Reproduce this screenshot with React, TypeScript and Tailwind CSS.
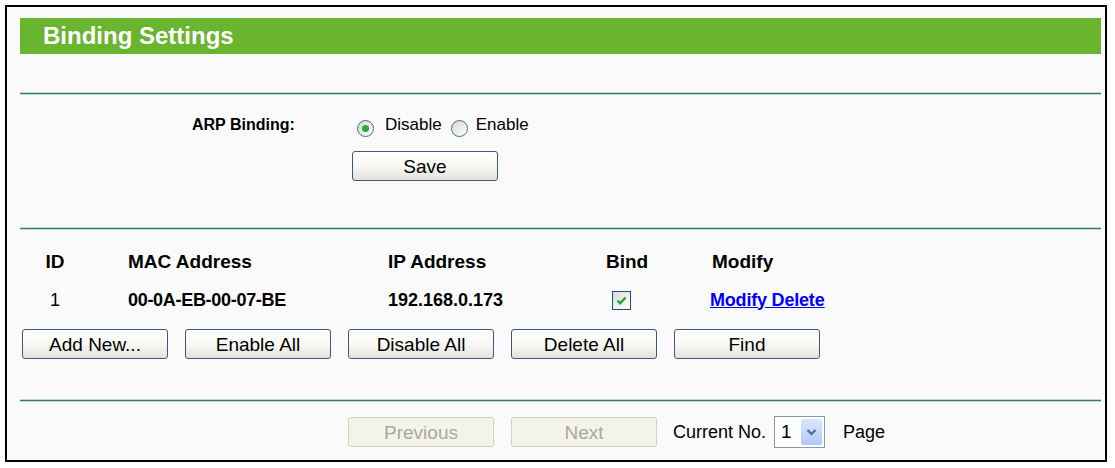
import React from 'react';

const font = { fontFamily: '"Liberation Sans", Arial, sans-serif' };

const Btn: React.FC<{ label: string; disabled?: boolean }> = ({ label, disabled }) => (
  <button
    type="button"
    disabled={disabled}
    className={
      disabled
        ? 'w-[146px] h-[30px] rounded-[3px] border border-[#d2d0c2] bg-[#f4f3ea] text-[#a9a89c] text-[19px] leading-none'
        : 'w-[146px] h-[30px] rounded-[3px] border border-[#3a5a7c] bg-gradient-to-b from-white via-[#f8f8f5] to-[#e3e2da] text-black text-[19px] leading-none'
    }
  >
    {label}
  </button>
);

const Radio: React.FC<{ checked?: boolean }> = ({ checked }) => (
  <span className="w-[17px] h-[17px] rounded-full border border-[#3d6a96] bg-gradient-to-br from-[#d6d6d0] to-white flex items-center justify-center">
    {checked && <span className="w-[7px] h-[7px] rounded-full bg-[#2fa83a]" />}
  </span>
);

const Divider = () => (
  <div className="w-[1081px] h-[3px] border-y border-[#b9e0c9] bg-[#3f7a5d]" />
);

export default function App() {
  return (
    <div className="w-[1115px] h-[468px] bg-white pt-[5px] pl-[5px]" style={font}>
      <div className="w-[1102px] h-[457px] border-2 border-black bg-[#fafafa] pl-[13px] flex flex-col">
        {/* Title */}
        <div className="mt-[11px] w-[1081px] h-[36px] bg-[#69b530] flex items-center pl-[23px]">
          <span className="text-white font-bold text-[24px]">Binding Settings</span>
        </div>

        <div className="mt-[38px]"><Divider /></div>

        {/* ARP binding */}
        <div className="mt-[14px] h-[32px] flex items-center">
          <span className="pl-[172px] w-[332px] font-bold text-[16px]">ARP Binding:</span>
          <div className="flex items-center text-[17px]">
            <span className="ml-[5px] mt-[6px]"><Radio checked /></span>
            <span className="ml-[11px]">Disable</span>
            <span className="ml-[9px] mt-[6px]"><Radio /></span>
            <span className="ml-[8px]">Enable</span>
          </div>
        </div>
        <div className="mt-[10px] pl-[332px]">
          <Btn label="Save" />
        </div>

        <div className="mt-[46px]"><Divider /></div>

        {/* Table header */}
        <div className="mt-[17px] h-[30px] flex items-center font-bold text-[19px]">
          <span className="w-[70px] text-center">ID</span>
          <span className="w-[260px] pl-[38px]">MAC Address</span>
          <span className="w-[220px] pl-[38px]">IP Address</span>
          <span className="w-[110px] pl-[36px]">Bind</span>
          <span className="pl-[32px]">Modify</span>
        </div>

        {/* Data row */}
        <div className="mt-[8px] h-[30px] flex items-center font-bold text-[18px]">
          <span className="w-[70px] text-center font-normal">1</span>
          <span className="w-[260px] pl-[38px] tracking-[-0.3px]">00-0A-EB-00-07-BE</span>
          <span className="w-[220px] pl-[38px]">192.168.0.173</span>
          <span className="w-[110px] pl-[42px]">
            <span className="w-[19px] h-[19px] border border-[#1c5180] bg-gradient-to-br from-[#dcdcd6] to-white flex items-center justify-center">
              <svg width="13" height="13" viewBox="0 0 13 13">
                <path d="M2.5 6.5 L5.2 9.2 L10.5 3.5" fill="none" stroke="#22a52e" strokeWidth="2.4" />
              </svg>
            </span>
          </span>
          <span className="pl-[30px] text-[#0000ff] underline tracking-[-0.2px]">
            <a href="#">Modify</a> <a href="#">Delete</a>
          </span>
        </div>

        {/* Action buttons */}
        <div className="mt-[14px] pl-[2px] flex gap-[17px]">
          <Btn label="Add New..." />
          <Btn label="Enable All" />
          <Btn label="Disable All" />
          <Btn label="Delete All" />
          <Btn label="Find" />
        </div>

        <div className="mt-[40px]"><Divider /></div>

        {/* Pagination */}
        <div className="mt-[14px] pl-[328px] flex items-center text-[18px]">
          <Btn label="Previous" disabled />
          <span className="ml-[17px]"><Btn label="Next" disabled /></span>
          <span className="ml-[16px]">Current No.</span>
          <div className="ml-[8px] w-[51px] h-[32px] border border-[#7f9db9] bg-white flex items-center justify-between pl-[6px] pr-[2px]">
            <span className="text-[19px]">1</span>
            <span className="w-[21px] h-[26px] rounded-[2px] bg-gradient-to-b from-[#dbe6fd] to-[#b2c7f5] flex items-center justify-center">
              <svg width="11" height="9" viewBox="0 0 11 9">
                <path d="M1.5 2 L5.5 6 L9.5 2" fill="none" stroke="#4d6aa3" strokeWidth="2.2" />
              </svg>
            </span>
          </div>
          <span className="ml-[18px]">Page</span>
        </div>
      </div>
    </div>
  );
}
